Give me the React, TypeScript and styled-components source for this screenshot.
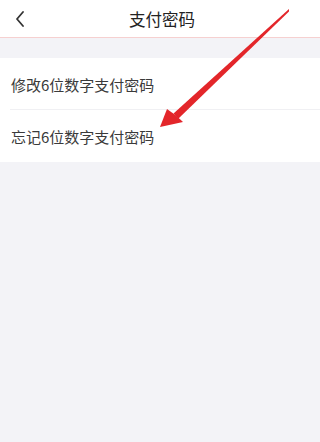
import React from "react";
import styled, { createGlobalStyle } from "styled-components";

const Global = createGlobalStyle`
  html, body { margin: 0; padding: 0; background: #f3f3f7; }
  body { font-family: "Noto Sans CJK SC", "Noto Sans", sans-serif; }
`;

const Page = styled.div`
  position: relative;
  width: 100%;
  min-width: 289px;
  height: 442px;
  background: #f3f3f7;
  overflow: hidden;
`;

const Header = styled.header`
  height: 37px;
  background: #ffffff;
  border-bottom: 1px solid #f6d0d0;
  display: flex;
  align-items: center;
`;

const BackButton = styled.div`
  display: flex;
  align-items: center;
  width: 129px;
  padding-left: 15px;
  box-sizing: border-box;
  height: 100%;
`;

const Title = styled.h1`
  margin: 0;
  font-size: 16.5px;
  font-weight: 400;
  color: #222;
  line-height: 36px;
`;

const List = styled.div`
  margin-top: 20px;
  background: #ffffff;
`;

const Row = styled.div<{ $divider?: boolean }>`
  height: 52px;
  display: flex;
  align-items: center;
  padding-left: 11px;
  font-size: 15px;
  color: #3a3a3a;
  position: relative;
  ${(p) =>
    p.$divider
      ? `&::after { content: ""; position: absolute; left: 10px; right: 0; bottom: 0; height: 1px; background: #f0f0f3; }`
      : ""}
`;

const Overlay = styled.svg`
  position: absolute;
  left: 0;
  top: 0;
  pointer-events: none;
`;

export default function App() {
  return (
    <Page>
      <Global />
      <Header>
        <BackButton>
          <svg width="10" height="16" viewBox="0 0 10 16">
            <path d="M8 1 L2 8 L8 15" fill="none" stroke="#333" strokeWidth="1.8" strokeLinecap="round" strokeLinejoin="round" />
          </svg>
        </BackButton>
        <Title>支付密码</Title>
      </Header>
      <List>
        <Row $divider>修改6位数字支付密码</Row>
        <Row>忘记6位数字支付密码</Row>
      </List>
      <Overlay width="289" height="442" viewBox="0 0 289 442">
        <defs>
          <filter id="soft" x="-10%" y="-10%" width="120%" height="120%">
            <feGaussianBlur stdDeviation="0.5" />
          </filter>
        </defs>
        <g filter="url(#soft)" fill="#e3252a">
          <polygon points="173.5,113.5 178.5,118.5 290,10.5 289,9" />
          <polygon points="160,127 167,109 176,115.5 183,122" />
        </g>
      </Overlay>
    </Page>
  );
}
